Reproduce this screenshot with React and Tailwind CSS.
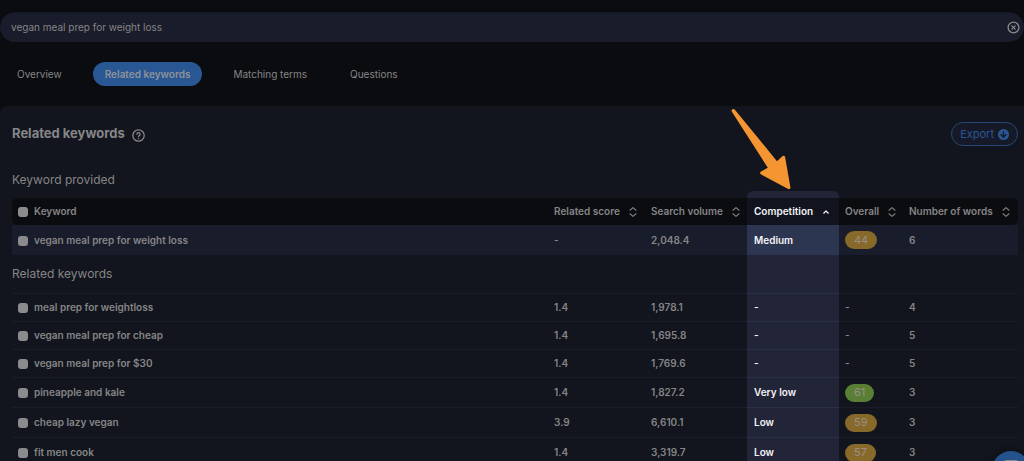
import { CircleX, ArrowDown } from "lucide-react";

const tabs = ["Overview", "Related keywords", "Matching terms", "Questions"];

const related = [
  { keyword: "meal prep for weightloss", score: "1.4", volume: "1,978.1", competition: "-", overall: "-", words: 4 },
  { keyword: "vegan meal prep for cheap", score: "1.4", volume: "1,695.8", competition: "-", overall: "-", words: 5 },
  { keyword: "vegan meal prep for $30", score: "1.4", volume: "1,769.6", competition: "-", overall: "-", words: 5 },
  { keyword: "pineapple and kale", score: "1.4", volume: "1,827.2", competition: "Very low", overall: 61, words: 3 },
  { keyword: "cheap lazy vegan", score: "3.9", volume: "6,610.1", competition: "Low", overall: 59, words: 3 },
  { keyword: "fit men cook", score: "1.4", volume: "3,319.7", competition: "Low", overall: 57, words: 3 },
];

const provided = {
  keyword: "vegan meal prep for weight loss",
  score: "-",
  volume: "2,048.4",
  competition: "Medium",
  overall: 44,
  words: 6,
};

function Check({ label }) {
  return (
    <input
      type="checkbox"
      aria-label={label}
      className="mt-px block size-[10px] shrink-0 appearance-none rounded-[3px] bg-[#8b8b8d] checked:bg-[#285793]"
    />
  );
}

function SortIcon() {
  return (
    <svg viewBox="0 0 8 12" className="h-3 w-2 shrink-0" fill="none" stroke="#7d7d7f" strokeWidth="1.2" strokeLinecap="round" strokeLinejoin="round" aria-hidden="true">
      <path d="M1 4.2 4 1.6 7 4.2" />
      <path d="M1 7.8 4 10.4 7 7.8" />
    </svg>
  );
}

function SortButton({ children, icon }) {
  return (
    <button type="button" className="flex items-center gap-[9px] whitespace-nowrap font-semibold">
      {children}
      {icon}
    </button>
  );
}

function Score({ value }) {
  if (value === "-") return "-";
  const tone = value > 60 ? "bg-[#587f33]" : "bg-[#87692a]";
  return (
    <span className={`inline-flex h-[18px] items-center rounded-full px-[9px] text-[11px] font-normal text-[#9a8f86] ${tone}`}>
      {value}
    </span>
  );
}

function Row({ item, height, first }) {
  const rowTone = first ? "bg-[#191c2a]" : "";
  const line = first ? "" : "border-t border-[#1a1d29]";
  const mid = first ? "bg-[#2c3650]" : "border-t border-[#2a3048] bg-[#222437]";
  return (
    <tr className={`${height} ${rowTone}`}>
      <td className={line}>
        <div className="flex items-center gap-[6px] pl-[6px]">
          <Check label={item.keyword} />
          {item.keyword}
        </div>
      </td>
      <td className={`pl-[7px] ${line}`}>{item.score}</td>
      <td className={`pl-[7px] ${line}`}>{item.volume}</td>
      <td className={`pl-[7px] text-[#f4f4f6] ${mid}`}>{item.competition}</td>
      <td className={`pl-[6px] ${line}`}>
        <div className="flex items-center"><Score value={item.overall} /></div>
      </td>
      <td className={`pl-[6px] ${line}`}>{item.words}</td>
    </tr>
  );
}

export default function App() {
  return (
    <div className="relative flex h-screen flex-col overflow-hidden bg-[#0b0c10] pt-3 font-['Inter',sans-serif] text-[10px] text-[#858587]">
      <form role="search" className="flex h-[30px] shrink-0 items-center rounded-full border-t border-[#151722] bg-[#191c2a] pl-[11px] pr-1">
        <input
          type="text"
          aria-label="Search keyword"
          defaultValue="vegan meal prep for weight loss"
          className="min-w-0 flex-1 bg-transparent text-[#858587] outline-none"
        />
        <button type="reset" aria-label="Clear search">
          <CircleX className="size-[13px] text-[#8b8b8d]" strokeWidth={2.4} />
        </button>
      </form>

      <nav className="mt-5 flex shrink-0 items-center gap-[19px] pl-[5px]">
        {tabs.map((tab) => (
          <button
            key={tab}
            type="button"
            className={`h-6 rounded-full px-3 ${tab === "Related keywords" ? "bg-[#285793] font-semibold text-[#8f9299]" : ""}`}
          >
            {tab}
          </button>
        ))}
      </nav>

      <main className="mt-5 flex-1 rounded-tl-lg bg-[#12151d] pl-3 pr-[6px] pt-4">
        <div className="flex h-6 items-center justify-between">
          <h1 className="flex items-center gap-[7px] text-[13px] font-bold">
            Related keywords
            <button type="button" aria-label="About related keywords" className="mt-[2px]">
              <svg viewBox="0 0 13 13" className="size-[13px]" fill="none" stroke="currentColor" strokeWidth="1.3" strokeLinecap="round" aria-hidden="true">
                <circle cx="6.5" cy="6.5" r="5.7" />
                <path d="M4.9 5.2a1.6 1.6 0 1 1 2.4 1.4c-.5.3-.8.5-.8 1" />
                <path d="M6.5 9.4v.1" />
              </svg>
            </button>
          </h1>
          <button type="button" className="flex h-6 items-center gap-1 rounded-full border border-[#234977] bg-[#161a28] px-2 text-[11px] text-[#285793]">
            Export
            <span className="flex size-[11px] items-center justify-center rounded-full bg-[#285793]">
              <ArrowDown className="size-[9px] text-[#12151d]" strokeWidth={3} />
            </span>
          </button>
        </div>

        <h2 className="mt-6 h-7 text-[12px] leading-5">Keyword provided</h2>

        <table className="w-full table-fixed border-separate border-spacing-0 text-left font-semibold">
          <colgroup>
            <col />
            <col className="w-[97px]" />
            <col className="w-[103px]" />
            <col className="w-[92px]" />
            <col className="w-[64px]" />
            <col className="w-[115px]" />
          </colgroup>
          <thead>
            <tr className="h-[27px]">
              <th className="rounded-l-md bg-[#0b0c10]">
                <div className="flex items-center gap-[6px] pl-[6px] font-semibold">
                  <Check label="Select all keywords" />
                  Keyword
                </div>
              </th>
              <th className="bg-[#0b0c10] pl-[7px]"><SortButton icon={<SortIcon />}>Related score</SortButton></th>
              <th className="bg-[#0b0c10] pl-[7px]"><SortButton icon={<SortIcon />}>Search volume</SortButton></th>
              <th className="relative bg-[#11131f] pl-[7px] text-[#f4f4f6]">
                <span className="absolute inset-x-0 bottom-full h-[7px] rounded-t-md bg-[#222437]" />
                <SortButton
                  icon={
                    <svg viewBox="0 0 8 6" className="h-[6px] w-2" fill="none" stroke="currentColor" strokeWidth="1.2" strokeLinecap="round" strokeLinejoin="round" aria-hidden="true">
                      <path d="M1.7 4.2 4 2 6.3 4.2" />
                    </svg>
                  }
                >
                  Competition
                </SortButton>
              </th>
              <th className="bg-[#0b0c10] pl-[6px]"><SortButton icon={<SortIcon />}>Overall</SortButton></th>
              <th className="rounded-r-md bg-[#0b0c10] pl-[6px]"><SortButton icon={<SortIcon />}>Number of words</SortButton></th>
            </tr>
          </thead>
          <tbody>
            <Row item={provided} height="h-[30px]" first />
            <tr className="h-[38px]">
              <th colSpan={3} scope="rowgroup" className="text-[12px] font-normal">Related keywords</th>
              <td className="bg-[#222437]" />
              <td colSpan={2} />
            </tr>
            {related.map((item) => (
              <Row key={item.keyword} item={item} height={item.overall === "-" ? "h-[28px]" : "h-[30px]"} />
            ))}
          </tbody>
        </table>
      </main>

      <svg viewBox="0 0 60 82" className="pointer-events-none absolute left-[731px] top-[108px] h-[82px] w-[60px]" aria-hidden="true">
        <path d="M.7 3.4C0 1.4 2.7.1 3.9 1.7L46 53.2 51.3 48.2C52.4 47.2 53.9 47.7 54.1 49.1L59.4 79.2C59.6 80.7 58.4 81.5 57.2 81L30.2 66.6C28.7 65.8 28.7 64.4 30 63.6L36.8 59.8Z" fill="#f49532" />
      </svg>

      <button type="button" aria-label="Open chat" className="absolute -bottom-7 right-[-6px] flex size-[38px] justify-center rounded-full bg-[#23528c] pt-[9px] shadow-[0_0_6px_rgba(0,0,0,0.5)]">
        <span className="h-3 w-4 rounded-sm bg-[#8b8b8d]" />
      </button>
    </div>
  );
}
